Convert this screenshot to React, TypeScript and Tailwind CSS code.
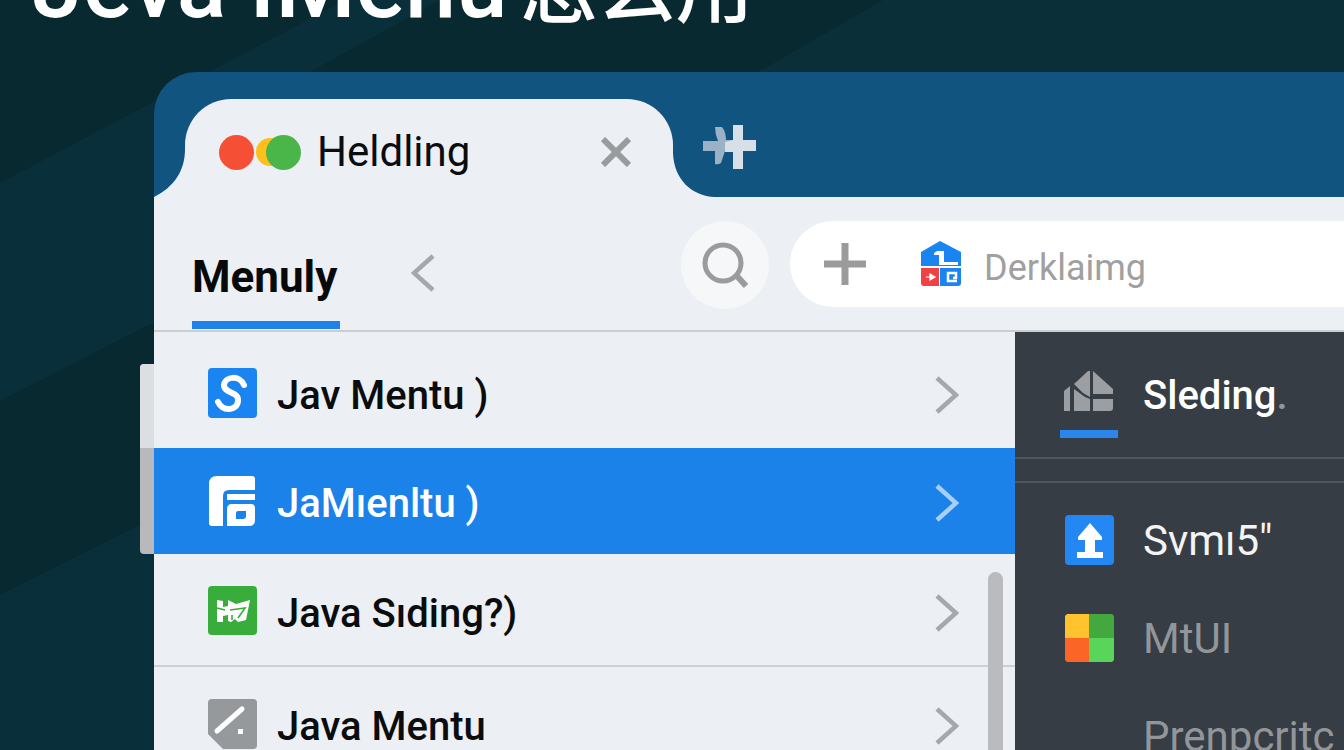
import React, { useState } from 'react';
import type { ReactNode } from 'react';

// --- ICONS ---

const Chevron = ({ left = false }: { left?: boolean }) => (
  <svg viewBox="0 0 24 38" className={left ? 'h-10 w-6 rotate-180' : 'h-[38px] w-6'} fill="none" stroke="currentColor" strokeWidth="4.5">
    <path d="M2 2 L21 19 L2 36" />
  </svg>
);

const LetterIcon = () => (
  <svg viewBox="0 0 49 50" className="h-[50px] w-[49px]">
    <rect width="49" height="50" rx="4" fill="#1a85f0" />
    <path d="M36 17 C32 7 17 8 16 17 C16 26 31 23 30 33 C29 43 15 44 10 34" fill="none" stroke="#fff" strokeWidth="6" strokeLinecap="round" />
  </svg>
);

const LayoutIcon = () => (
  <svg viewBox="0 0 49 50" className="h-[50px] w-[49px]" fill="#fff">
    <path d="M1 8 Q1 0 9 0 H44 Q47 0 47 3 V14 H21 Q15 14 15 20 V50 H4 Q1 50 1 47 Z" />
    <rect x="19" y="18" width="28" height="6" />
    <path fillRule="evenodd" d="M24 28 H43 Q47 28 47 32 V44 Q47 50 41 50 H19 V33 Q19 28 24 28 Z M30 35 Q28 35 28 37 V43 H35 Q38 43 38 40 V35 Z" />
  </svg>
);

const GreenIcon = () => (
  <svg viewBox="0 0 49 50" className="h-[50px] w-[49px]">
    <rect width="49" height="49" rx="4" fill="#39ad3c" />
    <path d="M9 14 L15 15 V21 L20 20 V14 L28 18 L42 14 L38 34 L30 36 L27 33 L23 36 L20 35 V29 L15 30 V36 H9 Z" fill="#fff" />
    <path d="M9 22 L17 24 M24 29 V34 M22 24 L37 22 L30 32" fill="none" stroke="#39ad3c" strokeWidth="1.6" />
  </svg>
);

const SlashIcon = () => (
  <svg viewBox="0 0 49 50" className="h-[50px] w-[49px]">
    <path d="M4 0 H45 Q49 0 49 4 V46 Q49 50 45 50 H15 L0 35 V4 Q0 0 4 0 Z" fill="#96999c" />
    <path d="M9 32 L34 10" stroke="#fff" strokeWidth="5" strokeLinecap="round" />
    <rect x="30" y="30" width="5" height="5" fill="#fff" />
  </svg>
);

const HouseIcon = () => (
  <svg viewBox="0 0 42 46" className="h-[46px] w-[42px] shrink-0">
    <path d="M1 11 L20 0 L41 11 V25 H1 Z" fill="#1a85f0" />
    <path d="M1 27 H19 V45 H4 Q1 45 1 42 Z" fill="#ee4245" />
    <path d="M20 27 H41 V42 Q41 45 38 45 H20 Z" fill="#1a85f0" />
    <path d="M14 12 L17 10 H24 V21 H38 V24 H19 V14 H14 Z" fill="#fff" />
    <path d="M37 40 H28 V32 H36 V37 H33" fill="none" stroke="#fff" strokeWidth="2.5" />
    <path d="M6 36 H10 M10 33 L15 36 L10 39 Z" fill="#fff" stroke="#fff" strokeWidth="1.2" />
  </svg>
);

const BlocksIcon = () => (
  <svg viewBox="0 0 50 42" className="h-[42px] w-[50px]" fill="#9b9fa3">
    <path d="M0 21 L6 16 V41 H0 Z" />
    <path d="M10 14 L24 1 H26 V27 L19 23 Z" />
    <path d="M29 1 L49 19 V24 H29 Z" />
    <path d="M10 19 L21 27 L26 29 V41 H10 Z" />
    <path d="M29 29 H49 V38 Q49 41 46 41 H29 Z" />
  </svg>
);

const UploadIcon = () => (
  <svg viewBox="0 0 49 50" className="h-[50px] w-[49px]">
    <rect width="49" height="50" rx="4" fill="#2387f4" />
    <path d="M25 8 L37 22 V25 H30 V37 H38 V43 H12 V37 H20 V25 H13 V22 Z" fill="#fff" />
  </svg>
);

const TilesIcon = () => (
  <svg viewBox="0 0 49 48" className="h-12 w-[49px]">
    <path d="M2 0 H24 V24 H0 V2 Z" fill="#fec32d" />
    <path d="M24 0 H47 L49 2 V24 H24 Z" fill="#43a93f" />
    <path d="M0 24 H24 V48 H2 L0 46 Z" fill="#fb6526" />
    <path d="M24 24 H49 V46 L47 48 H24 Z" fill="#59d65a" />
  </svg>
);

// --- DATA ---
interface MenuEntry {
  id: number;
  label: string;
  icon: ReactNode;
  row: string;
}

const MENU: MenuEntry[] = [
  { id: 1, label: 'Jav Mentu )', icon: <LetterIcon />, row: 'h-[116px] pt-9' },
  { id: 2, label: 'JaMıenltu )', icon: <LayoutIcon />, row: 'h-[106px] pt-7' },
  { id: 3, label: 'Java Sıding?)', icon: <GreenIcon />, row: 'h-[113px] pt-8 border-b-2 border-[#cdd0d3]' },
  { id: 4, label: 'Java Mentu', icon: <SlashIcon />, row: 'h-[113px] pt-8' },
];

const SUBMENU = [
  { id: 1, label: 'Svmı5"', icon: <UploadIcon />, color: 'text-[#f3f4f5]' },
  { id: 2, label: 'MtUI', icon: <TilesIcon />, color: 'text-[#92969a]' },
  { id: 3, label: 'Prenpcritc', icon: null, color: 'text-[#92969a]' },
];

export default function App() {
  const [selected, setSelected] = useState(2);
  const [query, setQuery] = useState('');

  return (
    <div className="relative h-screen overflow-hidden bg-[#082930] font-['Roboto','Noto_Sans_CJK_SC',sans-serif]">
      {/* Diagonal bands */}
      <svg className="absolute inset-0 h-full w-full" viewBox="0 0 1344 750" preserveAspectRatio="none">
        <path d="M0 183 L345 0 H440 L310 72 L154 322 L0 401 Z" fill="#09303a" />
        <path d="M0 595 L154 518 V750 H0 Z" fill="#09303a" />
        <path d="M758 72 L883 0 H1344 V72 Z" fill="#0a2f38" />
      </svg>

      <h1 className="relative -mt-[68px] flex h-[140px] items-baseline gap-3 pl-8 text-[92px] leading-[108px] font-medium whitespace-nowrap text-white">
        Jeva IMenu <span className="text-[78px]">怎么用</span>
      </h1>

      <div className="relative ml-[154px] flex h-full flex-col">
        {/* Tab strip */}
        <div className="flex h-[125px] shrink-0 items-end overflow-hidden rounded-tl-[42px] bg-[#10547f]">
          <svg viewBox="0 0 31 48" className="h-12 w-[31px] shrink-0" fill="#eceff3">
            <path d="M31 0 C31 22 20 38 0 48 H31 Z" />
          </svg>
          <div className="flex h-[98px] w-[488px] shrink-0 items-center rounded-t-[46px] bg-[#eceff3] pt-2 pr-[42px] pl-[34px]">
            <span className="flex items-center">
              <i className="z-10 h-[35px] w-[35px] rounded-full bg-[#f55036]" />
              <i className="ml-0.5 h-7 w-7 rounded-full bg-[#fcbf1e]" />
              <i className="-ml-[18px] h-[35px] w-[35px] rounded-full bg-[#4ab548]" />
            </span>
            <span className="ml-4 text-[42px] leading-none text-[#0b0c0d]">Heldling</span>
            <button aria-label="Close tab" className="ml-auto text-[#999c9f]">
              <svg viewBox="0 0 30 30" className="h-[30px] w-[30px]" stroke="currentColor" strokeWidth="6">
                <path d="M2 2 L28 28 M28 2 L2 28" />
              </svg>
            </button>
          </div>
          <svg viewBox="0 0 42 44" className="h-11 w-[42px] shrink-0" fill="#eceff3">
            <path d="M0 0 C1 26 18 43 42 44 H0 Z" />
          </svg>
          <button aria-label="New tab" className="-ml-3 mb-7">
            <svg viewBox="0 0 54 44" className="h-11 w-[54px]">
              <path d="M12 2 H19 Q23 7 23 15 H30 V26 H22 L18 38 Q15 40 12 39 V26 H0 V16 H15 Q12 9 12 2 Z" fill="#9bb1c6" />
              <path d="M30 0 H40 V15 H53 V26 H40 V44 H30 V27 H22 V17 L30 15 Z" fill="#d7dfe7" />
            </svg>
          </button>
        </div>

        {/* Toolbar */}
        <div className="flex h-[135px] shrink-0 items-start border-b-2 border-[#cbced1] bg-[#eceff3] pt-6 pl-[38px]">
          <button className="h-[108px] w-[148px] shrink-0 border-b-8 border-[#1f82ea] pt-3 text-left text-[44px] leading-[52px] font-bold text-[#08090a]">Menuly</button>
          <button aria-label="Back" className="mt-8 ml-[71px] shrink-0 text-[#a5a8ab]">
            <Chevron left />
          </button>
          <button aria-label="Search" className="ml-[246px] flex h-[88px] w-[88px] shrink-0 items-center justify-center rounded-full bg-[#f6f7f9] text-[#9b9b9b]">
            <svg viewBox="0 0 46 46" className="h-[46px] w-[46px]" fill="none" stroke="currentColor" strokeWidth="5">
              <circle cx="21" cy="21" r="18" />
              <path d="M34 33 L44 44" strokeWidth="6" />
            </svg>
          </button>
          <div className="ml-[21px] flex h-[86px] min-w-0 flex-1 items-center rounded-l-full bg-white pl-[34px]">
            <button aria-label="Add" className="mr-[54px] shrink-0 text-[#9b9b9b]">
              <svg viewBox="0 0 42 42" className="h-[42px] w-[42px]" stroke="currentColor" strokeWidth="7">
                <path d="M21 0 V42 M0 21 H42" />
              </svg>
            </button>
            <HouseIcon />
            <input
              type="text"
              aria-label="Search text"
              placeholder="Derklaimg"
              value={query}
              onChange={(e) => setQuery(e.target.value)}
              className="ml-[22px] w-full min-w-0 pt-2 text-[36px] text-[#555] outline-none placeholder:text-[#a0a0a0]"
            />
          </div>
        </div>

        <div className="relative flex min-h-0 flex-1">
          {/* Handle on the window edge */}
          <div className="absolute top-8 -left-3.5 h-[190px] w-3.5 overflow-hidden rounded-l bg-[#b7b9bb]">
            <div className="h-[84px] bg-[#dcdfe2]" />
          </div>

          {/* Menu */}
          <nav className="relative w-[861px] shrink-0 overflow-hidden bg-[#eceff3]">
            {MENU.map((item) => (
              <button
                key={item.id}
                onClick={() => setSelected(item.id)}
                className={`flex w-full items-start pr-14 pl-[54px] text-left ${item.row} ${selected === item.id ? 'bg-[#1a82e9] text-white' : 'text-[#0b0c0d]'}`}
              >
                {item.icon}
                <span className="ml-5 text-[40px] leading-[56px] font-medium whitespace-pre">{item.label}</span>
                <span className={`mt-2 ml-auto ${selected === item.id ? 'text-[#a9cff7]' : 'text-[#a5a8ab]'}`}>
                  <Chevron />
                </span>
              </button>
            ))}
            <div className="absolute top-[240px] right-3 bottom-0 w-[15px] rounded-t-full bg-[#b9bbbe]" />
          </nav>

          {/* Submenu */}
          <aside className="min-w-0 flex-1 overflow-hidden bg-[#373d44]">
            <button className="flex h-[127px] w-full items-start border-b-2 border-[#50565d] pt-9 pl-[45px] text-left">
              <span className="flex w-[58px] flex-col items-center border-b-8 border-[#2a86ec] pt-0.5 pb-[18px]">
                <BlocksIcon />
              </span>
              <span className="ml-[25px] text-[40px] leading-[56px] font-medium text-white">
                Sleding<span className="text-[#92969a]">.</span>
              </span>
            </button>
            <div className="h-6 border-b-2 border-[#50565d]" />
            <div className="pt-2">
              {SUBMENU.map((item) => (
                <button key={item.id} className={`flex h-[98px] w-full items-center pl-[50px] text-left text-[42px] ${item.color}`}>
                  <span className="w-[49px] shrink-0">{item.icon}</span>
                  <span className="ml-[29px]">{item.label}</span>
                </button>
              ))}
            </div>
          </aside>
        </div>
      </div>
    </div>
  );
}
